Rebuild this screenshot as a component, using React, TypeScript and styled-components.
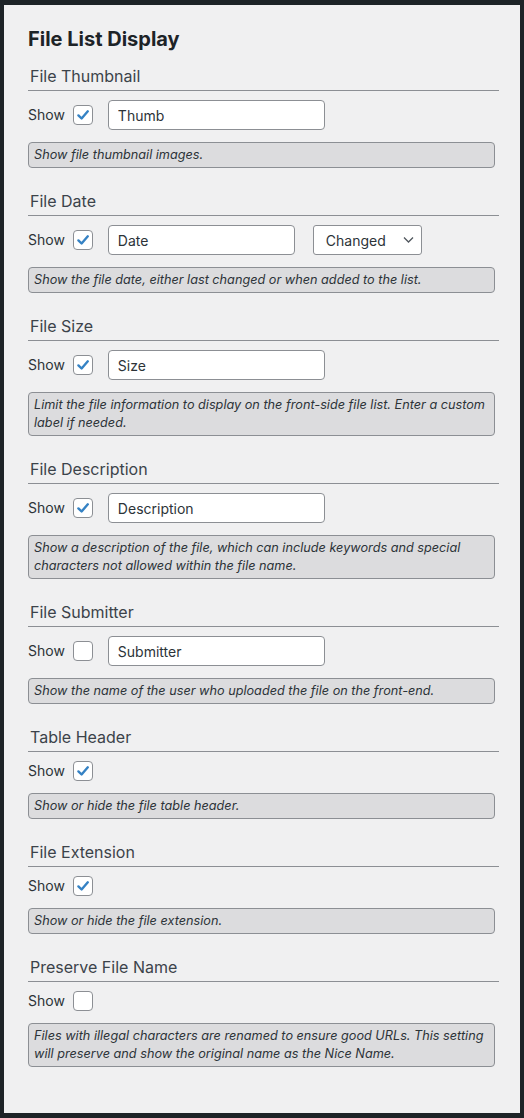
import React from 'react';
import styled, { createGlobalStyle } from 'styled-components';

const GlobalStyle = createGlobalStyle`
  html, body {
    margin: 0;
    padding: 0;
    background: #1d2327;
  }
  body {
    font-family: Inter, "Noto Sans", "Liberation Sans", sans-serif;
    -webkit-font-smoothing: antialiased;
  }
`;

const Page = styled.div`
  padding: 5px 4px 5px 4px;
  background: #1d2327;
`;

const Panel = styled.div`
  box-sizing: border-box;
  min-height: 1108px;
  background: #f0f0f1;
  padding: 21px 21px 20px 24px;
`;

const Title = styled.h2`
  margin: 0 0 14px;
  font-size: 20px;
  line-height: 26px;
  font-weight: 700;
  color: #1d2327;
`;

const Section = styled.section`
  margin-bottom: 23px;
`;

const Heading = styled.h3`
  margin: 0;
  padding: 0 0 4px 2px;
  font-size: 16px;
  line-height: 20px;
  font-weight: 400;
  color: #3c434a;
  border-bottom: 1px solid #8c8f94;
`;

const Row = styled.div`
  display: flex;
  align-items: center;
  margin-top: 9px;
  min-height: 20px;
`;

const ShowLabel = styled.span`
  font-size: 14px;
  line-height: 20px;
  color: #2c3338;
  margin-right: 8px;
`;

const Box = styled.span`
  box-sizing: border-box;
  display: inline-flex;
  align-items: center;
  justify-content: center;
  width: 20px;
  height: 20px;
  border: 1px solid #8c8f94;
  border-radius: 4px;
  background: #fff;
  margin-right: 15px;
`;

const TextInput = styled.input<{ $width: number }>`
  box-sizing: border-box;
  width: ${p => p.$width}px;
  height: 30px;
  margin: 0;
  padding: 0 9px;
  border: 1px solid #8c8f94;
  border-radius: 4px;
  background: #fff;
  font-family: inherit;
  font-size: 14px;
  color: #2c3338;
  outline: none;
`;

const SelectWrap = styled.div`
  position: relative;
  margin-left: 18px;
`;

const Select = styled.select`
  box-sizing: border-box;
  appearance: none;
  width: 109px;
  height: 30px;
  margin: 0;
  padding: 0 24px 0 12px;
  border: 1px solid #8c8f94;
  border-radius: 3px;
  background: #fff;
  font-family: inherit;
  font-size: 14px;
  color: #2c3338;
  outline: none;
`;

const Chevron = styled.svg`
  position: absolute;
  right: 8px;
  top: 11px;
  pointer-events: none;
`;

const Note = styled.div`
  box-sizing: border-box;
  margin: 12px 4px 0 0;
  padding: 3px 5px;
  background: #dcdcde;
  border: 1px solid #8c8f94;
  border-radius: 4px;
  font-size: 12.7px;
  line-height: 18px;
  font-style: italic;
  color: #2c3338;
`;

function Checkbox({ checked }: { checked: boolean }) {
  return (
    <Box>
      {checked && (
        <svg width="16" height="16" viewBox="0 0 16 16">
          <path d="M3.4 8.4 L6.6 11.5 L12.8 4.3" fill="none" stroke="#3582c4" strokeWidth="2.4" strokeLinecap="round" strokeLinejoin="round" />
        </svg>
      )}
    </Box>
  );
}

interface Item {
  title: string;
  checked: boolean;
  label?: string;
  width?: number;
  select?: boolean;
  note: string;
}

const items: Item[] = [
  { title: 'File Thumbnail', checked: true, label: 'Thumb', note: 'Show file thumbnail images.' },
  { title: 'File Date', checked: true, label: 'Date', width: 187, select: true, note: 'Show the file date, either last changed or when added to the list.' },
  { title: 'File Size', checked: true, label: 'Size', note: 'Limit the file information to display on the front-side file list. Enter a custom label if needed.' },
  { title: 'File Description', checked: true, label: 'Description', note: 'Show a description of the file, which can include keywords and special characters not allowed within the file name.' },
  { title: 'File Submitter', checked: false, label: 'Submitter', note: 'Show the name of the user who uploaded the file on the front-end.' },
  { title: 'Table Header', checked: true, note: 'Show or hide the file table header.' },
  { title: 'File Extension', checked: true, note: 'Show or hide the file extension.' },
  { title: 'Preserve File Name', checked: false, note: 'Files with illegal characters are renamed to ensure good URLs. This setting will preserve and show the original name as the Nice Name.' },
];

export default function App() {
  return (
    <Page>
      <GlobalStyle />
      <Panel>
        <Title>File List Display</Title>
        {items.map(item => (
          <Section key={item.title}>
            <Heading>{item.title}</Heading>
            <Row>
              <ShowLabel>Show</ShowLabel>
              <Checkbox checked={item.checked} />
              {item.label && (
                <TextInput $width={item.width ?? 217} defaultValue={item.label} readOnly />
              )}
              {item.select && (
                <SelectWrap>
                  <Select defaultValue="changed">
                    <option value="changed">Changed</option>
                    <option value="added">Added</option>
                  </Select>
                  <Chevron width="11" height="8" viewBox="0 0 11 8">
                    <path d="M1 1.5 L5.5 6 L10 1.5" fill="none" stroke="#50575e" strokeWidth="1.3" />
                  </Chevron>
                </SelectWrap>
              )}
            </Row>
            <Note>{item.note}</Note>
          </Section>
        ))}
      </Panel>
    </Page>
  );
}
